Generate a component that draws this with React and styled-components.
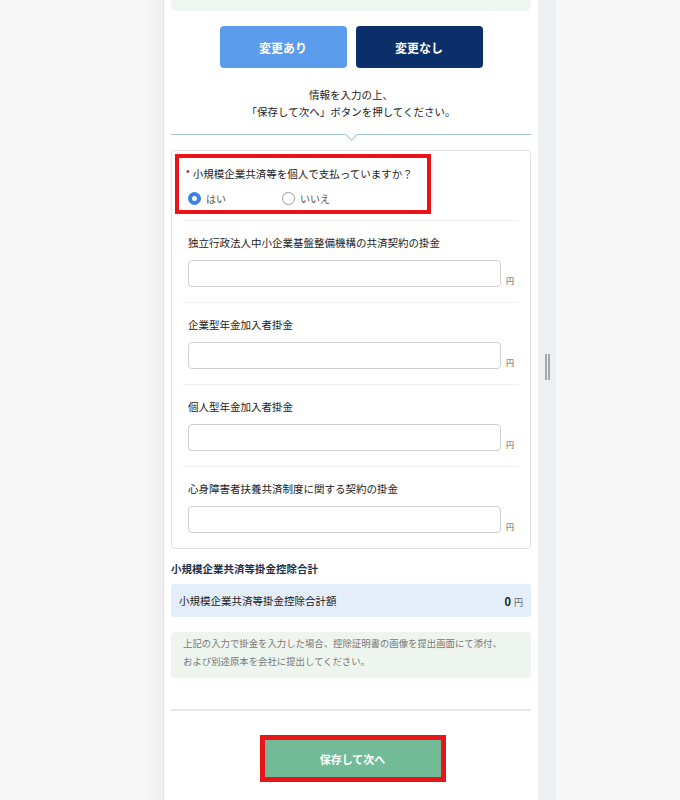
import React from "react";
import styled, { createGlobalStyle } from "styled-components";

const Global = createGlobalStyle`
  html, body { margin: 0; padding: 0; }
  body {
    font-family: "Noto Sans CJK JP", "Noto Sans", sans-serif;
    color: #333;
    background: #f7f7f7;
  }
  * { box-sizing: border-box; }
`;

const Page = styled.div`
  display: flex;
  width: 680px;
  height: 800px;
  overflow: hidden;
  background: #f7f7f7;
`;

const LeftGutter = styled.div`
  width: 164px;
  flex: none;
  background: linear-gradient(to right, #f7f7f7 0%, #f7f7f7 88%, #efefef 100%);
  border-right: 1px solid #e2e2e2;
`;

const Panel = styled.div`
  width: 374px;
  flex: none;
  background: #fff;
  padding: 0 7px;
  display: flex;
  flex-direction: column;
`;

const Scrollbar = styled.div`
  width: 18px;
  flex: none;
  background: #eeeff1;
  display: flex;
  justify-content: center;
  padding-top: 354px;
  gap: 1px;
`;

const Grip = styled.div`
  width: 2px;
  height: 26px;
  background: #a8a8a8;
`;

const TopNote = styled.div`
  height: 11px;
  background: #eef6ef;
  border-radius: 0 0 6px 6px;
`;

const ButtonRow = styled.div`
  display: flex;
  justify-content: center;
  gap: 9px;
  margin-top: 15px;
`;

const ChoiceButton = styled.button`
  width: 127px;
  height: 42px;
  border: none;
  border-radius: 4px;
  background: ${(p) => (p.$dark ? "#0b3069" : "#5c9cec")};
  color: #fff;
  font-family: inherit;
  font-size: 12px;
  font-weight: 700;
  padding: 0;
`;

const Guide = styled.p`
  margin: 18px 0 0;
  text-align: center;
  font-size: 10.5px;
  line-height: 17px;
  color: #222;
`;

const Divider = styled.div`
  position: relative;
  margin-top: 14px;
  height: 1px;
  background: #9fc6d6;
  &::after {
    content: "";
    position: absolute;
    left: 176px;
    top: -4px;
    width: 8px;
    height: 8px;
    background: #fff;
    border-right: 1px solid #9fc6d6;
    border-bottom: 1px solid #9fc6d6;
    transform: rotate(45deg);
  }
`;

const Card = styled.div`
  margin-top: 15px;
  border: 1px solid #e2e2e2;
  border-radius: 4px;
  padding: 3px 11px 15px 11px;
`;

const Highlight = styled.div`
  width: 256px;
  margin-left: -8px;
  margin-bottom: 6px;
  border: 4px solid #e8141a;
  padding: 8px 0 4px 7px;
`;

const Question = styled.div`
  font-size: 10.5px;
  line-height: 16px;
  color: #222;
  display: flex;
  align-items: flex-start;
`;

const Req = styled.span`
  color: #c0392b;
  font-size: 11px;
  line-height: 10px;
  margin-right: 3px;
  margin-top: -1px;
`;

const RadioRow = styled.div`
  display: flex;
  margin-top: 9px;
  padding-left: 2px;
`;

const RadioItem = styled.label`
  display: flex;
  align-items: center;
  gap: 5px;
  width: 94px;
  font-size: 10px;
  color: #555;
`;

const RadioDot = styled.span`
  width: 13px;
  height: 13px;
  border-radius: 50%;
  flex: none;
  background: ${(p) => (p.$on ? "#3b82e8" : "#fff")};
  border: 1px solid ${(p) => (p.$on ? "#3b82e8" : "#9a9a9a")};
  display: flex;
  align-items: center;
  justify-content: center;
  &::after {
    content: "";
    width: 5px;
    height: 5px;
    border-radius: 50%;
    background: #fff;
    display: ${(p) => (p.$on ? "block" : "none")};
  }
`;

const Field = styled.div`
  border-top: 1px solid #f0f0f0;
  padding: 14px 5px 15px;
  &:last-child {
    padding-bottom: 0;
  }
`;

const FieldLabel = styled.div`
  font-size: 10.5px;
  line-height: 16px;
  color: #222;
`;

const InputRow = styled.div`
  display: flex;
  align-items: flex-end;
  gap: 5px;
  margin-top: 9px;
`;

const Input = styled.div`
  width: 314px;
  height: 27px;
  border: 1px solid #cfcfcf;
  border-radius: 4px;
  background: #fff;
`;

const Yen = styled.span`
  font-size: 8px;
  color: #555;
  line-height: 10px;
  margin-bottom: 1px;
`;

const SectionTitle = styled.div`
  margin-top: 12px;
  font-size: 10.5px;
  font-weight: 700;
  line-height: 16px;
  color: #1c2f46;
`;

const TotalBox = styled.div`
  margin-top: 7px;
  height: 33px;
  background: #e4eefb;
  border-radius: 3px;
  display: flex;
  align-items: center;
  justify-content: space-between;
  padding: 0 8px;
  font-size: 10.5px;
  color: #222;
`;

const Amount = styled.span`
  font-weight: 700;
  font-size: 11px;
  color: #222;
  & > small {
    font-weight: 400;
    font-size: 9px;
    color: #666;
    margin-left: 3px;
  }
`;

const NoteBox = styled.div`
  margin-top: 15px;
  background: #eef5ef;
  border-radius: 4px;
  padding: 2px 12px 8px;
  font-size: 9.4px;
  line-height: 18px;
  color: #777;
`;

const BottomRule = styled.div`
  margin-top: 31px;
  height: 2px;
  background: #e6e6e6;
`;

const SaveWrap = styled.div`
  display: flex;
  justify-content: center;
  margin-top: 24px;
`;

const SaveFrame = styled.div`
  border: 5px solid #e8141a;
  margin-left: 3px;
`;

const SaveButton = styled.button`
  width: 176px;
  height: 37px;
  border: none;
  background: #72bb96;
  color: #fff;
  font-family: inherit;
  font-size: 11px;
  font-weight: 700;
  display: block;
`;

const RightBg = styled.div`
  flex: 1;
  background: #f7f7f7;
`;

const fields = [
  "独立行政法人中小企業基盤整備機構の共済契約の掛金",
  "企業型年金加入者掛金",
  "個人型年金加入者掛金",
  "心身障害者扶養共済制度に関する契約の掛金",
];

export default function App() {
  return (
    <>
      <Global />
      <Page>
        <LeftGutter />
        <Panel>
          <TopNote />
          <ButtonRow>
            <ChoiceButton>変更あり</ChoiceButton>
            <ChoiceButton $dark>変更なし</ChoiceButton>
          </ButtonRow>
          <Guide>
            情報を入力の上、
            <br />
            「保存して次へ」ボタンを押してください。
          </Guide>
          <Divider />
          <Card>
            <Highlight>
              <Question>
                <Req>•</Req>
                小規模企業共済等を個人で支払っていますか？
              </Question>
              <RadioRow>
                <RadioItem>
                  <RadioDot $on />
                  はい
                </RadioItem>
                <RadioItem>
                  <RadioDot />
                  いいえ
                </RadioItem>
              </RadioRow>
            </Highlight>
            {fields.map((f) => (
              <Field key={f}>
                <FieldLabel>{f}</FieldLabel>
                <InputRow>
                  <Input />
                  <Yen>円</Yen>
                </InputRow>
              </Field>
            ))}
          </Card>
          <SectionTitle>小規模企業共済等掛金控除合計</SectionTitle>
          <TotalBox>
            <span>小規模企業共済等掛金控除合計額</span>
            <Amount>
              0<small>円</small>
            </Amount>
          </TotalBox>
          <NoteBox>
            上記の入力で掛金を入力した場合、控除証明書の画像を提出画面にて添付、
            <br />
            および別途原本を会社に提出してください。
          </NoteBox>
          <BottomRule />
          <SaveWrap>
            <SaveFrame>
              <SaveButton>保存して次へ</SaveButton>
            </SaveFrame>
          </SaveWrap>
        </Panel>
        <Scrollbar>
          <Grip />
          <Grip />
        </Scrollbar>
        <RightBg />
      </Page>
    </>
  );
}
